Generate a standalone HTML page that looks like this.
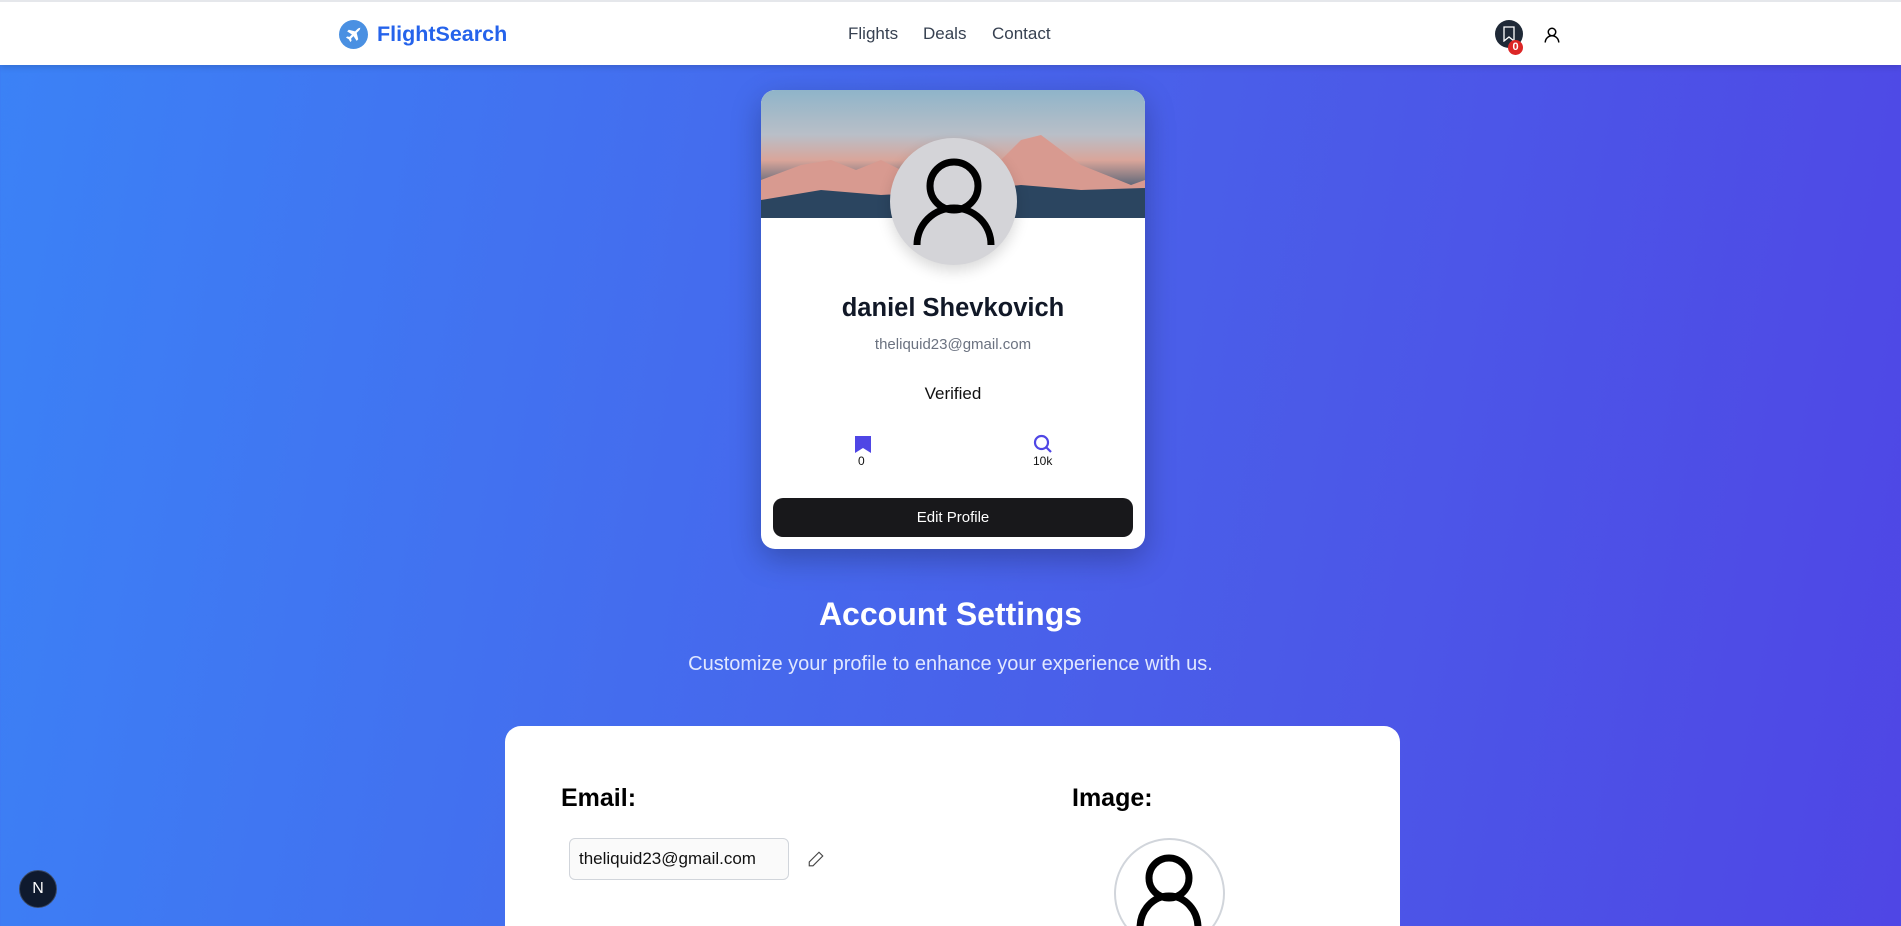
<!DOCTYPE html>
<html style="overflow:hidden;width:1901px;height:926px"><head><meta charset="utf-8"><style>
*{box-sizing:border-box;margin:0;padding:0}
html,body{overflow:hidden}
body{width:1901px;height:926px;font-family:"Liberation Sans",sans-serif;background:linear-gradient(100deg,#3b82f6 0%,#4a5ee9 60%,#4f46e5 100%);position:relative}
.nav{position:absolute;left:0;top:0;width:1901px;height:65px;background:#fff;border-top:2px solid #e5e7eb;box-shadow:0 2px 6px rgba(0,0,0,.15)}
.abs{position:absolute}
.card{position:absolute;left:761px;top:90px;width:384px;height:459px;background:#fff;border-radius:14px;overflow:hidden;box-shadow:0 10px 30px rgba(0,0,0,.25)}
.banner{position:absolute;left:0;top:0;width:384px;height:128px;background:linear-gradient(180deg,#8fb4c9 0%,#b9bfc8 35%,#d9a59a 55%,#3e5770 80%,#1e3148 100%)}
.c{position:absolute;left:0;width:1901px;text-align:center}
.card .c{width:384px}
</style></head><body>
<div class="nav">
 <div class="abs" style="left:339px;top:18px;width:29px;height:29px;border-radius:50%;background:#4a90e2"></div>
 <svg class="abs" style="left:344px;top:23px" width="19" height="19" viewBox="0 0 24 24"><path d="M21 4c-1-1-3 0-4 1l-3 3-8-2-2 2 6 4-3 3-3-.5-1.5 1.5 3.5 2 2 3.5 1.5-1.5-.5-3 3-3 4 6 2-2-2-8 3-3c1-1 2-3 1-4z" fill="#fff"/></svg>
 <div class="abs" style="left:377px;top:20px;font-size:21.5px;font-weight:bold;color:#2563eb">FlightSearch</div>
 <div class="abs" style="left:848px;top:22px;font-size:17px;color:#374151">Flights</div>
 <div class="abs" style="left:923px;top:22px;font-size:17px;color:#374151">Deals</div>
 <div class="abs" style="left:992px;top:22px;font-size:17px;color:#374151">Contact</div>
 <div class="abs" style="left:1495px;top:18px;width:28px;height:28px;border-radius:50%;background:#1f2937"></div>
 <svg class="abs" style="left:1502px;top:24px" width="14" height="16" viewBox="0 0 14 16"><path d="M2 1h10v14l-5-4-5 4z" fill="none" stroke="#fff" stroke-width="1.3"/></svg>
 <div class="abs" style="left:1508px;top:38px;width:15px;height:15px;border-radius:50%;background:#dc2626;color:#fff;font-size:11px;font-weight:bold;text-align:center;line-height:15px">0</div>
 <svg class="abs" style="left:1543px;top:24px" width="18" height="18" viewBox="0 0 24 24" fill="none" stroke="#000" stroke-width="2"><circle cx="12" cy="8" r="5"/><path d="M3 22a9 9 0 0118 0"/></svg>
</div>

<div class="card">
 <div class="banner"></div>
 <svg class="abs" style="left:0;top:30px" width="384" height="98" viewBox="0 0 384 98"><path d="M0 60 L40 45 L70 40 L95 50 L120 40 L150 55 L175 52 L200 60 L230 50 L260 20 L280 15 L320 45 L370 65 L384 60 V98 H0Z" fill="#d89a90"/><path d="M0 80 L60 70 L120 75 L180 72 L260 65 L320 70 L384 68 V98 H0Z" fill="#2b4560"/></svg>
 <div class="abs" style="left:129px;top:48px;width:127px;height:127px;border-radius:50%;background:#d4d4d8;box-shadow:0 6px 14px rgba(0,0,0,.15)"></div>
 <svg class="abs" style="left:0;top:0" width="384" height="200" viewBox="0 0 384 200" fill="none" stroke="#000" stroke-width="7"><circle cx="193" cy="96" r="24"/><path d="M156 155A37 37 0 0 1 230 155"/></svg>
 <div class="c" style="top:204px;font-size:25.5px;font-weight:bold;color:#111827">daniel Shevkovich</div>
 <div class="c" style="top:246px;font-size:15px;color:#6b7280">theliquid23@gmail.com</div>
 <div class="c" style="top:294px;font-size:17px;color:#111">Verified</div>
 <svg class="abs" style="left:94px;top:346px" width="16" height="17" viewBox="0 0 16 17"><path d="M0 0h16v17l-8-5-8 5z" fill="#4f46e5"/></svg>
 <div class="abs" style="left:97px;top:364px;font-size:12px;color:#111">0</div>
 <svg class="abs" style="left:272px;top:344px" width="20" height="20" viewBox="0 0 20 20" fill="none" stroke="#4f46e5" stroke-width="2.2"><circle cx="8.5" cy="8.5" r="6.5"/><path d="M13 13l5 5"/></svg>
 <div class="abs" style="left:272px;top:364px;font-size:12px;color:#111">10k</div>
 <div class="abs" style="left:12px;top:408px;width:360px;height:39px;border-radius:10px;background:#18181b;color:#fff;font-size:15px;text-align:center;line-height:39px">Edit Profile</div>
</div>

<div class="c" style="top:596px;font-size:32px;font-weight:bold;color:#fff">Account Settings</div>
<div class="c" style="top:653px;font-size:20px;color:#e0e7ff">Customize your profile to enhance your experience with us.</div>

<div class="abs" style="left:505px;top:726px;width:895px;height:200px;background:#fff;border-radius:16px 16px 0 0">
 <div class="abs" style="left:56px;top:58px;font-size:25px;font-weight:bold;color:#000">Email:</div>
 <div class="abs" style="left:64px;top:112px;width:220px;height:42px;border:1px solid #d1d5db;border-radius:6px;background:#fafafa;font-size:17px;line-height:40px;padding-left:9px;color:#111">theliquid23@gmail.com</div>
 <svg class="abs" style="left:302px;top:124px" width="18" height="18" viewBox="0 0 24 24" fill="none" stroke="#444" stroke-width="1.5"><path d="M16 3l5 5L8 21H3v-5z"/></svg>
 <div class="abs" style="left:567px;top:58px;font-size:25px;font-weight:bold;color:#000">Image:</div>
 <div class="abs" style="left:609px;top:112px;width:111px;height:111px;border-radius:50%;border:2px solid #d1d5db"></div>
 <svg class="abs" style="left:609px;top:112px" width="111" height="88" viewBox="0 0 111 88" fill="none" stroke="#000" stroke-width="7"><circle cx="55" cy="40" r="20"/><path d="M26 90A29 32 0 0 1 84 90"/></svg>
</div>

<div class="abs" style="left:19px;top:870px;width:38px;height:38px;border-radius:50%;background:#0f1a2e;border:1px solid #3b4a66;color:#fff;font-size:16px;text-align:center;line-height:36px">N</div>
</body></html>
